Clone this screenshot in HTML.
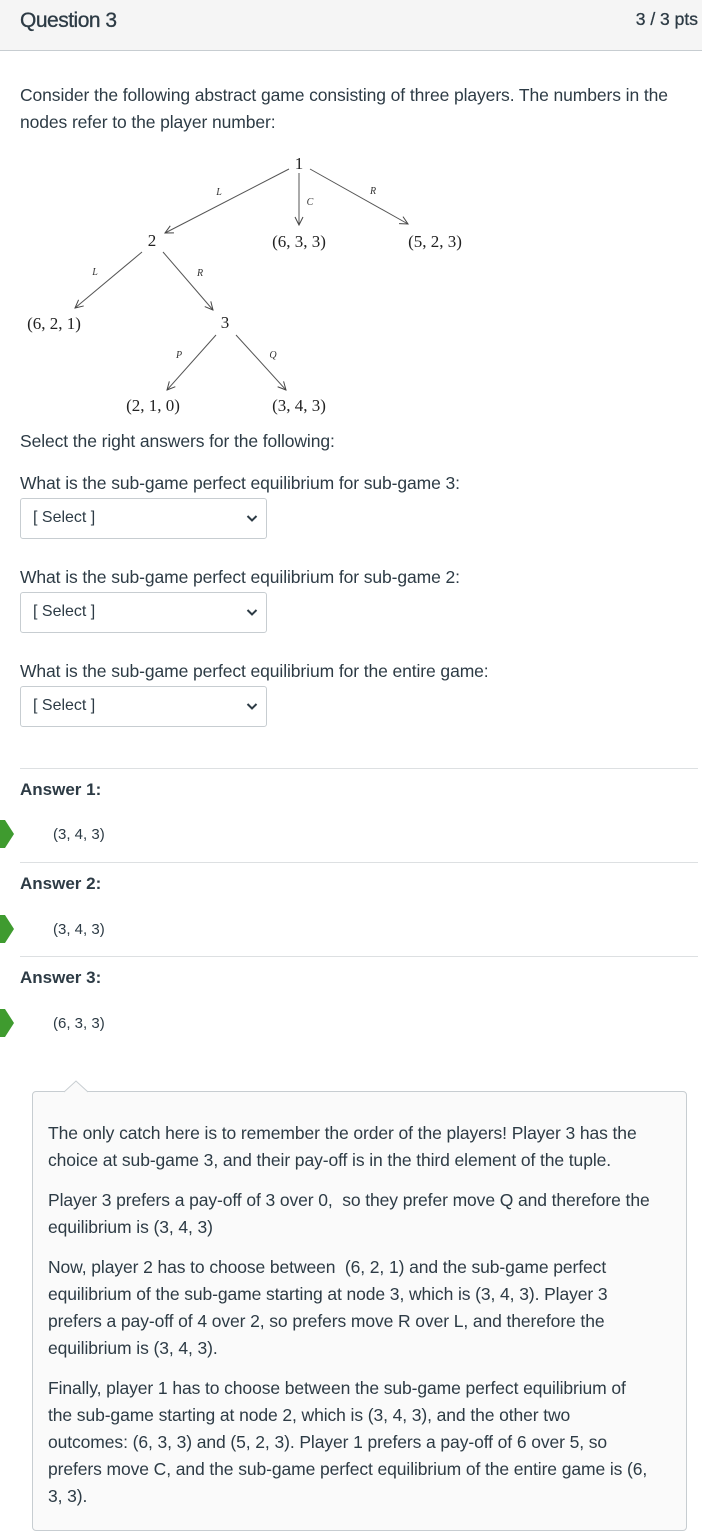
<!DOCTYPE html>
<html><head><style>
body{margin:0;width:702px;height:1516px;overflow:hidden;background:#fff;font-family:"Liberation Sans",sans-serif;color:#2d3b45;}
.hdr{position:absolute;left:0;top:0;width:702px;height:50px;background:#f5f5f5;border-bottom:1px solid #c7cdd1;}
.hdr .t{position:absolute;left:20px;top:9px;font-size:21px;color:#2d3b45;letter-spacing:-0.5px;-webkit-text-stroke:0.3px #2d3b45}
.hdr .p{position:absolute;right:4px;top:9px;font-size:17.5px;color:#2d3b45;-webkit-text-stroke:0.3px #2d3b45}
.txt{position:absolute;left:20px;font-size:17.5px;line-height:27px;white-space:nowrap;letter-spacing:-0.1px}
.sel{position:absolute;left:20px;width:247px;height:41px;border:1px solid #c7cdd1;border-radius:3px;box-sizing:border-box;}
.sel span{position:absolute;left:12px;top:10px;font-size:16px;color:#2d3b45}
.sel svg{position:absolute;right:8px;top:15px}
.hr{position:absolute;left:20px;width:678px;height:1px;background:#dde0e2}
.ans{position:absolute;left:20px;font-size:17px;font-weight:bold}
.val{position:absolute;left:53px;font-size:15px;color:#2d3b45}
.arr{position:absolute;left:0;width:14px;height:28px}
.box{position:absolute;left:32px;top:1091px;width:655px;height:440px;border:1px solid #c7cdd1;border-radius:4px;background:#fafafa;box-sizing:border-box}
.box p{margin:0 0 13px 0;font-size:17.5px;line-height:27px;white-space:nowrap;letter-spacing:-0.1px}
</style></head><body>
<div class="hdr"><div class="t">Question 3</div><div class="p">3 / 3 pts</div></div>
<div class="txt" style="top:82px">Consider the following abstract game consisting of three players. The numbers in the<br>nodes refer to the player number:</div>
<svg style="position:absolute;left:0;top:0" width="702" height="430">
<defs><marker id="a" markerWidth="10" markerHeight="10" refX="9" refY="5" orient="auto" markerUnits="userSpaceOnUse"><path d="M1 1L9 5L1 9" fill="none" stroke="#444" stroke-width="1"/></marker></defs>
<g stroke="#555" stroke-width="1" marker-end="url(#a)">
<line x1="289" y1="169" x2="165" y2="233"/><line x1="299" y1="173" x2="299" y2="225"/><line x1="310" y1="169" x2="408" y2="224"/>
<line x1="142" y1="252" x2="75" y2="308"/><line x1="163" y1="252" x2="213" y2="310"/>
<line x1="216" y1="335" x2="167" y2="390"/><line x1="236" y1="335" x2="286" y2="390"/>
</g>
<g font-family="Liberation Serif" fill="#222" font-size="17" text-anchor="middle">
<text x="299" y="169">1</text><text x="152" y="246">2</text><text x="225" y="328">3</text>
<text x="299" y="247">(6, 3, 3)</text><text x="435" y="247">(5, 2, 3)</text><text x="54" y="329">(6, 2, 1)</text>
<text x="153" y="411">(2, 1, 0)</text><text x="299" y="411">(3, 4, 3)</text>
</g>
<g font-family="Liberation Serif" font-style="italic" fill="#333" font-size="10" text-anchor="middle">
<text x="219" y="195">L</text><text x="310" y="205">C</text><text x="373" y="194">R</text><text x="95" y="275">L</text><text x="200" y="276">R</text><text x="179" y="358">P</text><text x="273" y="358">Q</text>
</g></svg>
<div class="txt" style="top:428px">Select the right answers for the following:</div>
<div class="txt" style="top:470px">What is the sub-game perfect equilibrium for sub-game 3:</div>
<div class="sel" style="top:498px"><span>[ Select ]</span><svg width="12" height="9"><path d="M1.5 2L6 6.5L10.5 2" fill="none" stroke="#2d3b45" stroke-width="2"/></svg></div>
<div class="txt" style="top:564px">What is the sub-game perfect equilibrium for sub-game 2:</div>
<div class="sel" style="top:592px"><span>[ Select ]</span><svg width="12" height="9"><path d="M1.5 2L6 6.5L10.5 2" fill="none" stroke="#2d3b45" stroke-width="2"/></svg></div>
<div class="txt" style="top:658px">What is the sub-game perfect equilibrium for the entire game:</div>
<div class="sel" style="top:686px"><span>[ Select ]</span><svg width="12" height="9"><path d="M1.5 2L6 6.5L10.5 2" fill="none" stroke="#2d3b45" stroke-width="2"/></svg></div>
<div class="hr" style="top:768px"></div>
<div class="ans" style="top:780px">Answer 1:</div>
<svg class="arr" style="top:820px" viewBox="0 0 14 28"><path d="M0 0H5L14 14L5 28H0Z" fill="#3f9b2f"/></svg>
<div class="val" style="top:826px">(3, 4, 3)</div>
<div class="hr" style="top:862px"></div>
<div class="ans" style="top:874px">Answer 2:</div>
<svg class="arr" style="top:915px" viewBox="0 0 14 28"><path d="M0 0H5L14 14L5 28H0Z" fill="#3f9b2f"/></svg>
<div class="val" style="top:921px">(3, 4, 3)</div>
<div class="hr" style="top:956px"></div>
<div class="ans" style="top:968px">Answer 3:</div>
<svg class="arr" style="top:1009px" viewBox="0 0 14 28"><path d="M0 0H5L14 14L5 28H0Z" fill="#3f9b2f"/></svg>
<div class="val" style="top:1015px">(6, 3, 3)</div>
<div class="box"><div style="padding:28px 15px 0 15px">
<p>The only catch here is to remember the order of the players! Player 3 has the<br>choice at sub-game 3, and their pay-off is in the third element of the tuple.</p>
<p>Player 3 prefers a pay-off of 3 over 0,&nbsp; so they prefer move Q and therefore the<br>equilibrium is (3, 4, 3)</p>
<p>Now, player 2 has to choose between&nbsp; (6, 2, 1) and the sub-game perfect<br>equilibrium of the sub-game starting at node 3, which is (3, 4, 3). Player 3<br>prefers a pay-off of 4 over 2, so prefers move R over L, and therefore the<br>equilibrium is (3, 4, 3).</p>
<p>Finally, player 1 has to choose between the sub-game perfect equilibrium of<br>the sub-game starting at node 2, which is (3, 4, 3), and the other two<br>outcomes: (6, 3, 3) and (5, 2, 3). Player 1 prefers a pay-off of 6 over 5, so<br>prefers move C, and the sub-game perfect equilibrium of the entire game is (6,<br>3, 3).</p>
</div></div>
<svg style="position:absolute;left:64px;top:1080px" width="26" height="13"><path d="M0 12L12 1L24 12" fill="#fafafa" stroke="#c7cdd1"/></svg>
</body></html>
